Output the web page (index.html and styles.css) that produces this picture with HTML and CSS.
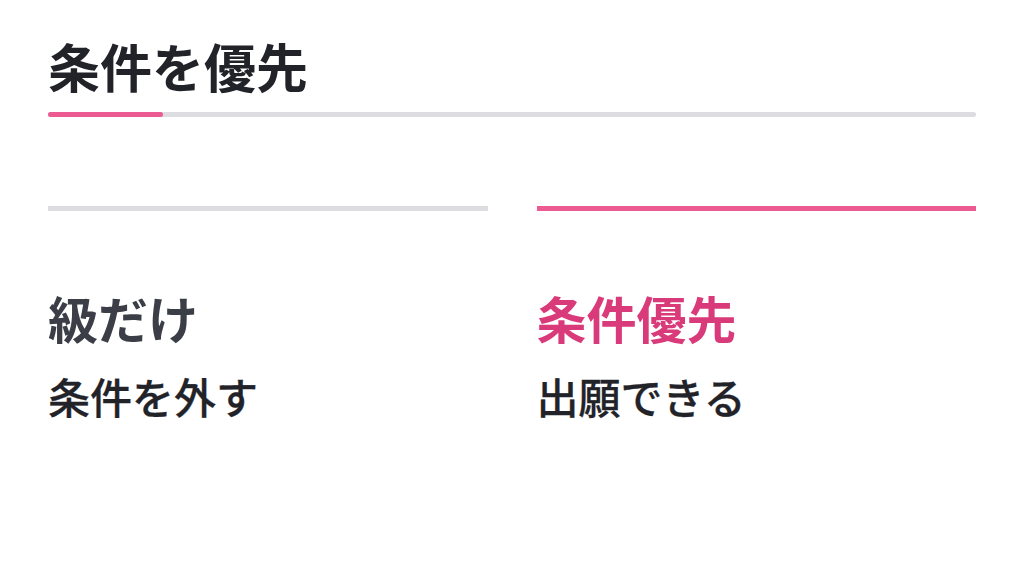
FILE: index.html
```html
<html>
<head>
    <title>条件を優先</title>
    <link rel="stylesheet" href="styles.css">
</head>
<body>
    <div class="page">
        <h1 class="title">条件を優先</h1>
        <div class="track">
            <div class="track-fill" style="width: 115px;"></div>
        </div>
        <div class="options">
            <div class="option">
                <div class="option-bar"></div>
                <div class="option-name">級だけ</div>
                <div class="option-desc">条件を外す</div>
            </div>
            <div class="option selected">
                <div class="option-bar"></div>
                <div class="option-name">条件優先</div>
                <div class="option-desc">出願できる</div>
            </div>
        </div>
    </div>
</body>
</html>
```

FILE: styles.css
```css
body {
    margin: 0;
    background-color: #fff;
    font-family: "Noto Sans CJK JP", "Noto Sans", sans-serif;
    color: #222329;
}
.page {
    padding: 34px 48px 0;
}
.title {
    margin: 0;
    font-size: 52px;
    font-weight: 700;
    line-height: 64px;
}
.track {
    margin-top: 14px;
    height: 5px;
    border-radius: 3px;
    background-color: #dcdce1;
}
.track-fill {
    height: 100%;
    border-radius: 3px;
    background-color: #eb5a91;
}
.options {
    display: grid;
    grid-template-columns: 1fr 1fr;
    gap: 49px;
    margin-top: 89px;
}
.option-bar {
    height: 5px;
    background-color: #dcdce1;
}
.option-name {
    margin-top: 76px;
    font-size: 50px;
    font-weight: 700;
    line-height: 60px;
    color: #3b3e47;
}
.option-desc {
    margin-top: 21px;
    font-size: 42px;
    font-weight: 500;
    line-height: 56px;
    color: #222329;
    -webkit-text-stroke: 0.3px #222329;
}
.selected .option-bar {
    background-color: #eb5a91;
}
.selected .option-name {
    color: #d93b7a;
}
```
